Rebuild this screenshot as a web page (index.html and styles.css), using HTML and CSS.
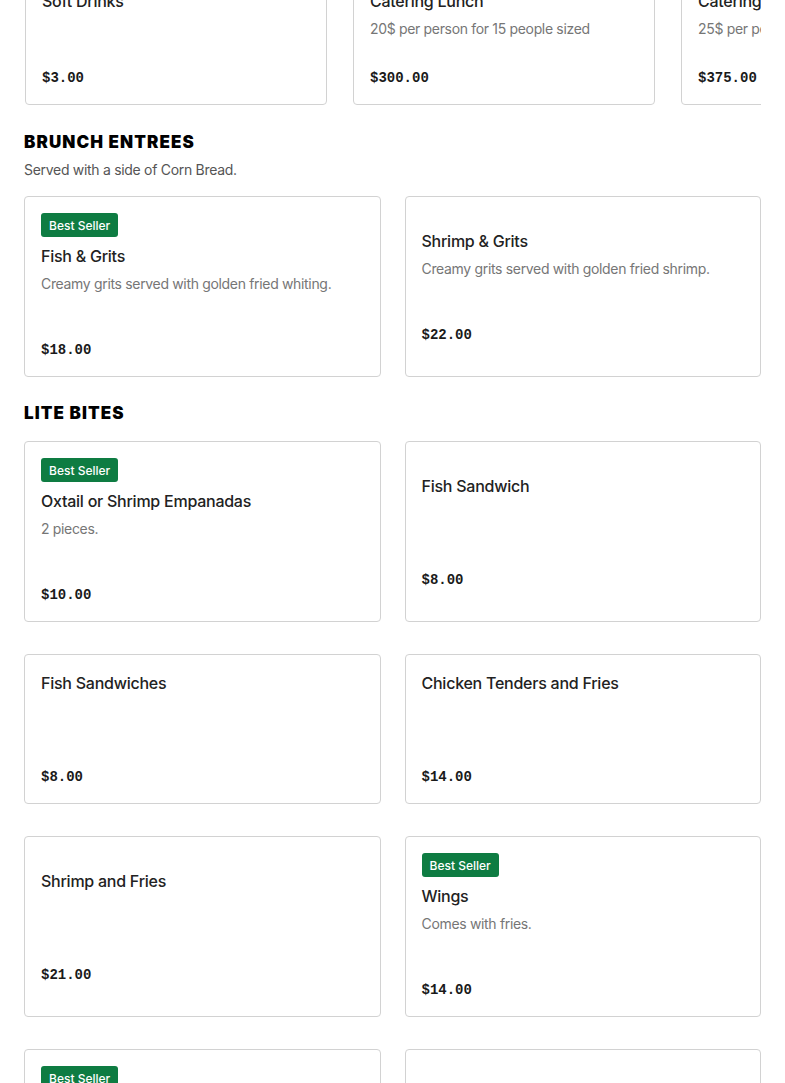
FILE: index.html
```html
<!DOCTYPE html>
<html lang="en">
<head>
<meta charset="utf-8">
<title>Menu</title>
<link rel="stylesheet" href="styles.css">
</head>
<body>
<main class="page">
  <div class="carousel">
    <div class="ccard">
      <div class="title">Soft Drinks</div>
      <div class="desc"></div>
      <div class="price">$3.00</div>
    </div>
    <div class="ccard">
      <div class="title">Catering Lunch</div>
      <div class="desc">20$ per person for 15 people sized</div>
      <div class="price">$300.00</div>
    </div>
    <div class="ccard">
      <div class="title">Catering Dinner</div>
      <div class="desc">25$ per person for 15 people sized</div>
      <div class="price">$375.00</div>
    </div>
  </div>

  <section class="section">
    <div class="sec-head">
      <h2 class="sec-title">Brunch Entrees</h2>
      <p class="sec-sub">Served with a side of Corn Bread.</p>
    </div>
    <div class="grid">
      <div class="card">
        <span class="badge">Best Seller</span>
        <div class="title">Fish &amp; Grits</div>
        <div class="desc">Creamy grits served with golden fried whiting.</div>
        <div class="price">$18.00</div>
      </div>
      <div class="card">
        <div class="title">Shrimp &amp; Grits</div>
        <div class="desc">Creamy grits served with golden fried shrimp.</div>
        <div class="price">$22.00</div>
      </div>
    </div>
  </section>

  <section class="section">
    <div class="sec-head">
      <h2 class="sec-title">Lite Bites</h2>
    </div>
    <div class="grid">
      <div class="card">
        <span class="badge">Best Seller</span>
        <div class="title">Oxtail or Shrimp Empanadas</div>
        <div class="desc">2 pieces.</div>
        <div class="price">$10.00</div>
      </div>
      <div class="card">
        <div class="title">Fish Sandwich</div>
        <div class="desc"></div>
        <div class="price">$8.00</div>
      </div>
      <div class="card">
        <div class="title">Fish Sandwiches</div>
        <div class="desc"></div>
        <div class="price">$8.00</div>
      </div>
      <div class="card">
        <div class="title">Chicken Tenders and Fries</div>
        <div class="desc"></div>
        <div class="price">$14.00</div>
      </div>
      <div class="card">
        <div class="title">Shrimp and Fries</div>
        <div class="desc"></div>
        <div class="price">$21.00</div>
      </div>
      <div class="card">
        <span class="badge">Best Seller</span>
        <div class="title">Wings</div>
        <div class="desc">Comes with fries.</div>
        <div class="price">$14.00</div>
      </div>
      <div class="card">
        <span class="badge">Best Seller</span>
        <div class="title">Oxtail Plate</div>
        <div class="desc">Served with rice and peas.</div>
        <div class="price">$24.00</div>
      </div>
      <div class="card">
        <div class="title">Fried Chicken</div>
        <div class="desc"></div>
        <div class="price">$15.00</div>
      </div>
    </div>
  </section>
</main>
</body>
</html>
```

FILE: styles.css
```css
* { box-sizing: border-box; }
html, body { margin: 0; padding: 0; background: #ffffff; }
body {
  font-family: "Inter", "Liberation Sans", sans-serif;
  color: #1f1f1f;
  -webkit-font-smoothing: antialiased;
}
.page { padding: 0 24px 40px; }

.carousel {
  display: flex;
  gap: 26px;
  overflow: hidden;
  padding: 0 1px;
  margin-top: -28px;
}
.ccard {
  flex: 0 0 302px;
  border: 1px solid #d2d2d2;
  border-radius: 4px;
  padding: 16px;
}
.ccard .desc { min-height: 40px; margin-top: 6px; }
.ccard .price { margin-top: 9px; }

.title {
  font-size: 16px;
  line-height: 24px;
  font-weight: 500;
  color: #222222;
  letter-spacing: -0.25px;
}
.desc {
  font-size: 14px;
  line-height: 20px;
  color: #767676;
  white-space: nowrap;
  letter-spacing: -0.33px;
}
.price {
  font-family: "Liberation Mono", monospace;
  font-weight: 700;
  font-size: 14px;
  line-height: 20px;
  color: #1a1a1a;
}

.section { padding-top: 25px; }
.section + .section { padding-top: 24px; }
.sec-head { margin-bottom: 16px; }
.sec-title {
  margin: 0;
  font-family: "Inter", "Liberation Sans", sans-serif;
  font-weight: 900;
  font-size: 17px;
  line-height: 24px;
  text-transform: uppercase;
  color: #000000;
  letter-spacing: 1.1px;
}
.sec-sub {
  margin: 6px 0 0;
  font-size: 14px;
  line-height: 20px;
  color: #555555;
  letter-spacing: -0.3px;
}

.grid {
  display: grid;
  grid-template-columns: 1fr 1fr;
  column-gap: 24px;
  row-gap: 32px;
}
.card {
  display: flex;
  flex-direction: column;
  justify-content: center;
  align-items: flex-start;
  border: 1px solid #d2d2d2;
  border-radius: 4px;
  padding: 16px;
}
.card .desc { min-height: 40px; margin-top: 6px; }
.card .price { margin-top: 26px; }

.badge {
  display: inline-flex;
  align-items: center;
  height: 24px;
  padding: 0 8px;
  margin-bottom: 7px;
  background: #0e7c42;
  color: #ffffff;
  border-radius: 3px;
  font-size: 12px;
  font-weight: 500;
}
```
